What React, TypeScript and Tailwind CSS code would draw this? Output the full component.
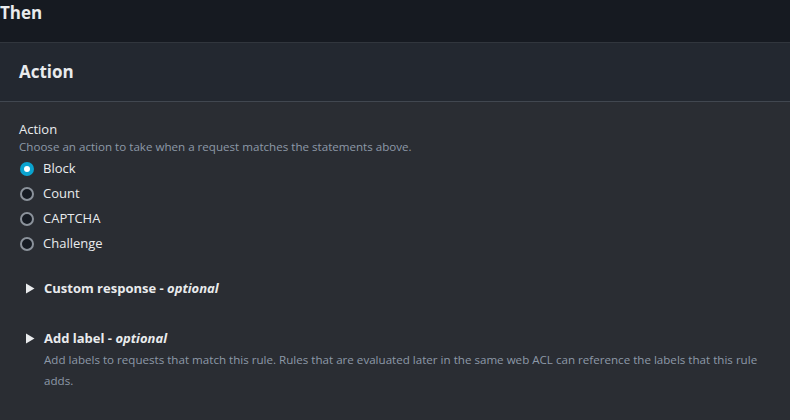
const actions = ["Block", "Count", "CAPTCHA", "Challenge"];

const Radio = ({ checked }: { checked: boolean }) =>
  checked ? (
    <span className="flex h-[14px] w-[14px] items-center justify-center rounded-full bg-[#0aa3cf]">
      <span className="h-[6px] w-[6px] rounded-full bg-white" />
    </span>
  ) : (
    <span className="h-[14px] w-[14px] rounded-full border-2 border-[#8b929b] bg-[#161b23]" />
  );

const Caret = () => (
  <svg width="10" height="11" viewBox="0 0 10 11" className="shrink-0">
    <path d="M1 0.5 L9.5 5.5 L1 10.5 Z" fill="#e9ebed" />
  </svg>
);

const App = () => {
  return (
    <div
      className="h-[420px] w-[790px] overflow-hidden bg-[#2a2d33] text-[#e9ebed]"
      style={{ fontFamily: '"Open Sans", "Noto Sans", sans-serif' }}
    >
      <div className="h-[43px] border-b border-[#31363d] bg-[#161a21]">
        <h2 className="text-[17px] font-bold leading-[26px]">Then</h2>
      </div>

      <div className="flex h-[59px] items-center border-b border-[#414750] bg-[#232830] px-[19px]">
        <h3 className="text-[17px] font-bold">Action</h3>
      </div>

      <div className="px-[19px] pt-[17px]">
        <div className="text-[13px] leading-[20px]">Action</div>
        <div className="text-[11.6px] leading-[16px] text-[#8d99a8]">
          Choose an action to take when a request matches the statements above.
        </div>
        <div className="mt-[1px] flex flex-col">
          {actions.map((a, i) => (
            <label key={a} className="flex h-[25px] items-center gap-[9px] pl-[1px]">
              <Radio checked={i === 0} />
              <span className="text-[13px]">{a}</span>
            </label>
          ))}
        </div>

        <div className="mt-[23px] flex items-center gap-[9px] pl-[6px]">
          <Caret />
          <span className="text-[13px] font-bold">
            Custom response - <i className="font-bold">optional</i>
          </span>
        </div>

        <div className="mt-[30px] flex items-center gap-[9px] pl-[6px]">
          <Caret />
          <span className="text-[13px] font-bold">
            Add label - <i className="font-bold">optional</i>
          </span>
        </div>
        <p className="mt-[1px] pl-[25px] text-[11.6px] leading-[21px] text-[#8d99a8]">
          Add labels to requests that match this rule. Rules that are evaluated later in the same web
          ACL can reference the labels that this rule adds.
        </p>
      </div>
    </div>
  );
};

export default App;
